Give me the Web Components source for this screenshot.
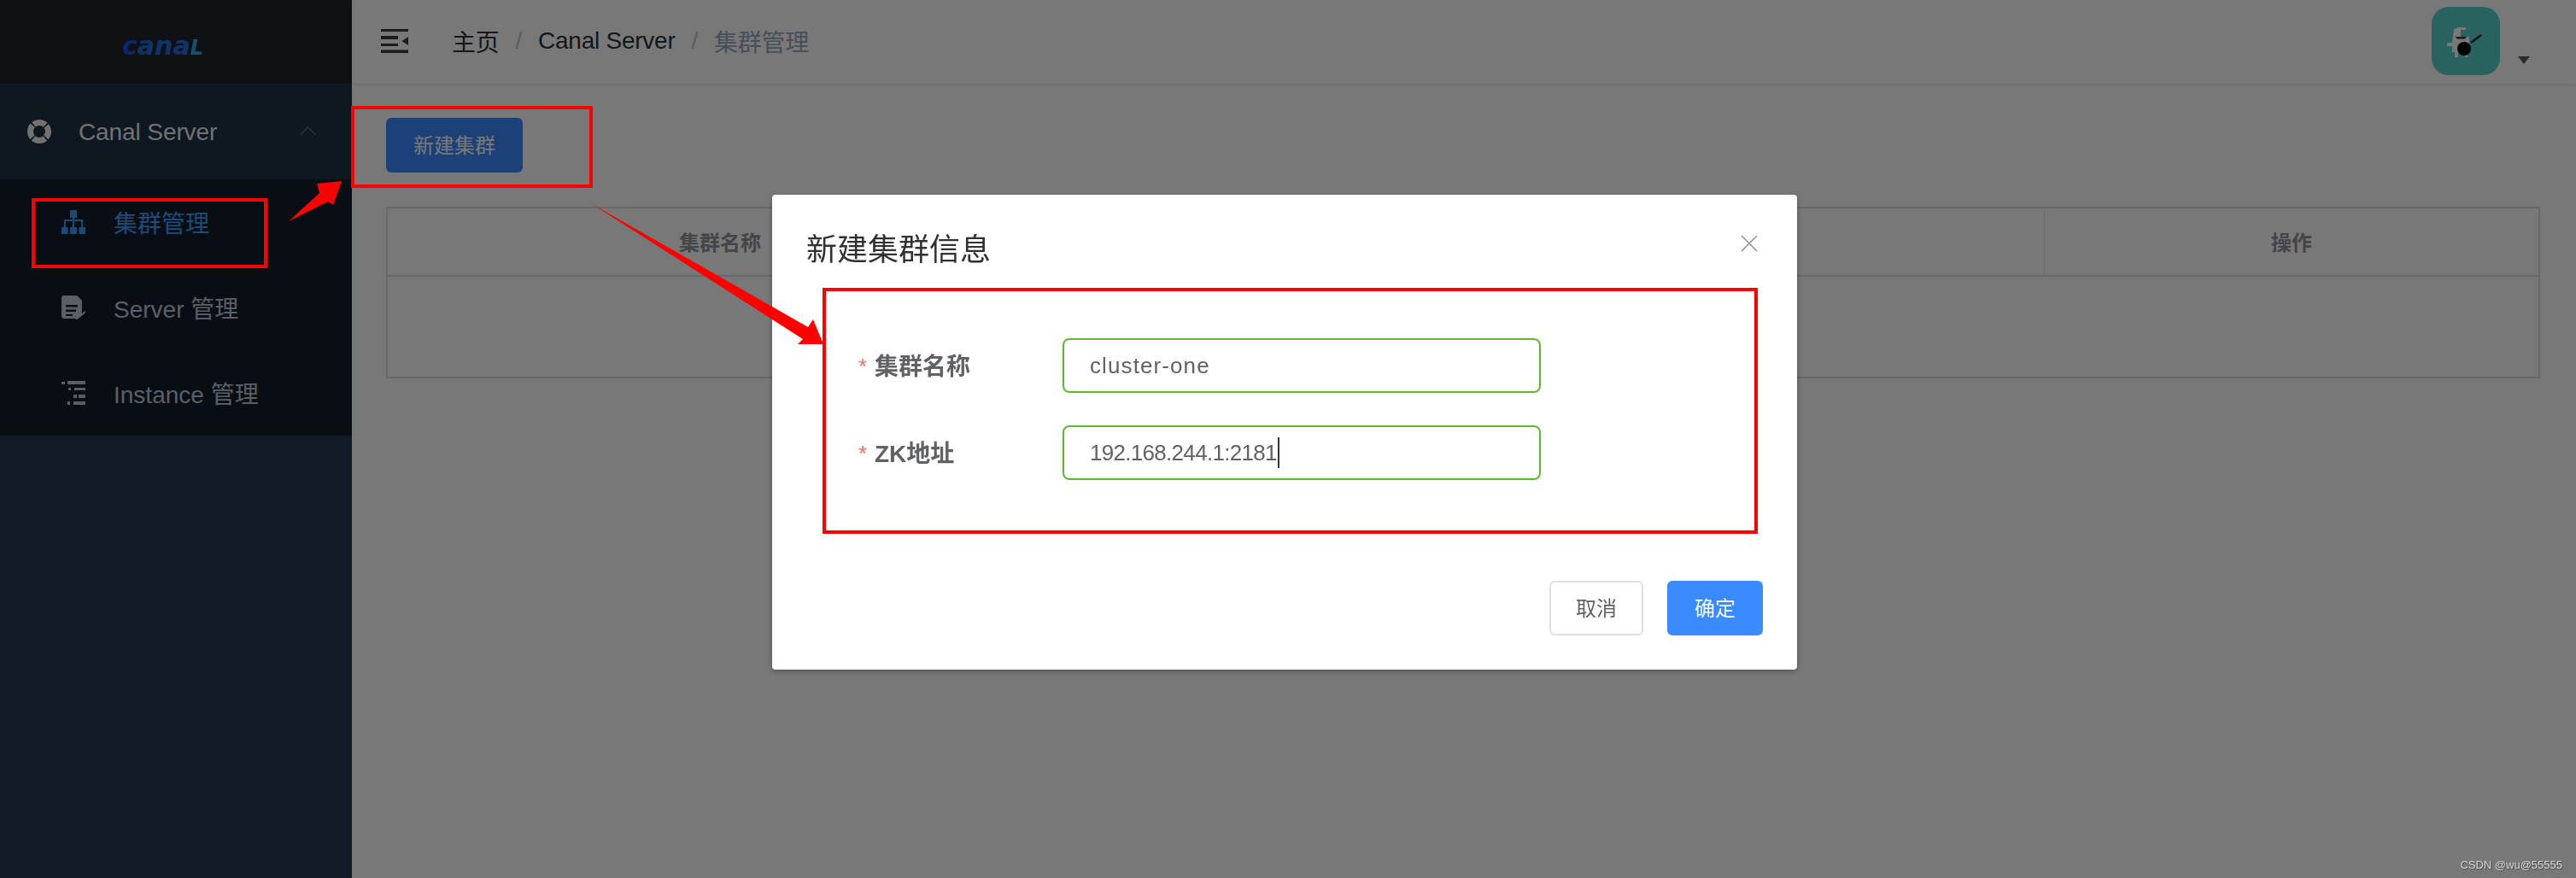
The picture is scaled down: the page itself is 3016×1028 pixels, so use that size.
<!DOCTYPE html>
<html lang="zh">
<head>
<meta charset="utf-8">
<title>新建集群</title>
<style>
  html, body { margin: 0; height: 100%; background: #fff; }
  body { font-family: "Liberation Sans", "Noto Sans CJK SC", sans-serif; }
</style>
</head>
<body>
<admin-layout>
  <side-nav slot="nav">
    <nav-group icon="aperture" label="Canal Server">
      <nav-item icon="tree" active>集群管理</nav-item>
      <nav-item icon="doc">Server 管理</nav-item>
      <nav-item icon="list">Instance 管理</nav-item>
    </nav-group>
  </side-nav>
  <top-bar slot="top"></top-bar>
  <cluster-page></cluster-page>
</admin-layout>

<modal-overlay>
  <app-modal heading="新建集群信息">
    <form-row label="集群名称" value="cluster-one" style="--spacing: 1.1px"></form-row>
    <form-row label="ZK地址" value="192.168.244.1:2181" caret style="--spacing: -.7px"></form-row>
    <app-button slot="footer">取消</app-button>
    <app-button slot="footer" primary>确定</app-button>
  </app-modal>
</modal-overlay>

<red-marks></red-marks>
<water-mark>CSDN @wu@55555</water-mark>

<script>
const ICONS = {
  aperture: '<circle cx="14" cy="14" r="10.500" fill="none" stroke="currentColor" stroke-width="7" stroke-dasharray="14.900 1.600" stroke-dashoffset="7.450"/>',
  tree: '<path fill="currentColor" d="M10 0h8v9h-8zM13 9h2v3h-2zM3 11h22v2H3zM3 13h2v7H3zM13 13h2v7h-2zM23 13h2v7h-2zM0 20h7.500v8H0zM10 20h8v8h-8zM20.500 20H28v8h-7.500z"/>',
  doc: '<path fill="currentColor" fill-rule="evenodd" d="M3 0h15l6 6v16l-5 5H3a3 3 0 0 1-3-3V3a3 3 0 0 1 3-3zM5 11v2.500h14V11zM5 16.500V19h12v-2.500zM5 22v2h8v-2z"/><path fill="none" stroke="currentColor" stroke-width="2" d="M17 28l11-9"/>',
  list: '<path fill="currentColor" d="M0 1h4v3H0zM7 0h21v4H7zM8 8h3v3H8zM15 8h13v3H15zM14 16h4v4h-4zM20 16h8v4h-8zM7 24h3v4H7zM14 24h14v4H14z"/>'
};

class AdminLayout extends HTMLElement {
  connectedCallback() {
    this.attachShadow({ mode: 'open' });
    this.shadowRoot.innerHTML = `
      <style>
        :host { display: flex; height: 1028px; }
        .nav { flex: 0 0 412px; display: flex; }
        .main { flex: 1; min-width: 0; display: flex; flex-direction: column; background: #fff; }
      </style>
      <div class="nav"><slot name="nav"></slot></div>
      <div class="main"><slot name="top"></slot><slot></slot></div>
    `;
  }
}

class SideNav extends HTMLElement {
  connectedCallback() {
    this.attachShadow({ mode: 'open' });
    this.shadowRoot.innerHTML = `
      <style>
        :host { display: flex; flex-direction: column; flex: 1; background: #283951; }
        .logo {
          height: 98px;
          background: #20242d;
          display: flex;
          align-items: center;
          justify-content: center;
          padding: 10px 31px 0 0;
          box-sizing: border-box;
          font: italic 700 30px/1 "DejaVu Sans", sans-serif;
          color: #2370e0;
        }
        .logo i { font-style: inherit; color: #2050e8; }
        .logo b { font-size: 24px; color: #28b0f0; }
      </style>
      <div class="logo"><span><i>c</i>ana<b>L</b></span></div>
      <slot></slot>
    `;
  }
}

class NavGroup extends HTMLElement {
  connectedCallback() {
    this.attachShadow({ mode: 'open' });
    this.shadowRoot.innerHTML = `
      <style>
        :host { display: block; color: #f0f0f0; font-size: 28px; }
        .title {
          height: 112px;
          display: flex;
          align-items: center;
          background: #203144;
          padding: 0 42px 0 32px;
        }
        .title svg.i { width: 28px; height: 28px; margin-right: 32px; }
        .title span { margin-top: 2px; letter-spacing: -.1px; }
        .title svg.c { margin-left: auto; width: 19px; height: 10px; margin-top: -3px; color: #5d6a78; }
        .items { background: #151e2d; }
      </style>
      <div class="title">
        <svg class="i" viewBox="0 0 28 28">${ICONS[this.getAttribute('icon')]}</svg>
        <span>${this.getAttribute('label')}</span>
        <svg class="c" viewBox="0 0 19 10"><path d="M1 9.500L9.500 1 18 9.500" fill="none" stroke="currentColor" stroke-width="1.500"/></svg>
      </div>
      <div class="items"><slot></slot></div>
    `;
  }
}

class NavItem extends HTMLElement {
  connectedCallback() {
    this.attachShadow({ mode: 'open' });
    this.shadowRoot.innerHTML = `
      <style>
        :host {
          display: flex;
          align-items: center;
          gap: 33px;
          height: 100px;
          padding-left: 72px;
          font-size: 28px;
          color: #bfcbd9;
        }
        :host([active]) { color: #409eff; }
        svg { width: 28px; height: 28px; margin-top: -1px; }
      </style>
      <svg viewBox="0 0 28 28">${ICONS[this.getAttribute('icon')]}</svg>
      <span><slot></slot></span>
    `;
  }
}

class TopBar extends HTMLElement {
  connectedCallback() {
    this.attachShadow({ mode: 'open' });
    this.shadowRoot.innerHTML = `
      <style>
        :host {
          display: flex;
          align-items: center;
          height: 98px;
          padding-left: 34px;
          background: #fff;
          box-shadow: 0 2px 2px rgba(0, 21, 41, .08);
          font-size: 28px;
          color: #303133;
        }
        .burger { width: 32px; height: 28px; flex: none; margin-top: -2px; color: #3c3c3c; }
        .crumbs { margin-left: 51px; display: flex; align-items: center; margin-top: -2px; }
        .crumbs span { letter-spacing: -.25px; }
        .sep { margin: 0 19px; color: #c0c4cc; }
        .last { color: #97a8be; }
        .avatar {
          align-self: flex-start;
          margin: 8px 0 0 auto;
          width: 80px;
          height: 80px;
          border-radius: 20px;
          background: #55d3c9;
          flex: none;
        }
        .avatar svg { display: block; }
        .drop {
          align-self: flex-start;
          margin: 66px 54px 0 21px;
          width: 0;
          height: 0;
          border: solid transparent;
          border-width: 9px 7.500px 0;
          border-top-color: #5a5a5a;
        }
      </style>
      <svg class="burger" viewBox="0 0 32 28">
        <path fill="currentColor" d="M0 0h32v3H0zM0 8h20v4H0zM0 17h20v3H0zM0 24.500h32V28H0zM32 9v10l-7.500-5z"/>
      </svg>
      <div class="crumbs">
        <span>主页</span><span class="sep">/</span>
        <span>Canal Server</span><span class="sep">/</span>
        <span class="last">集群管理</span>
      </div>
      <div class="avatar">
        <svg width="80" height="80" viewBox="0 0 80 80">
          <path fill="#fff" d="M26 26l6-2h8v3h-6v8h10v16h-2v8h-3v-6H31v6h-4v-6h-3v-7h-6v-4h6z"/>
          <path fill="#333" d="M28 35h13l-2 2.500H30z"/>
          <circle cx="38" cy="49" r="8" fill="#000"/>
          <path d="M46 42l12-9" stroke="#123" stroke-width="2.500"/>
        </svg>
      </div>
      <span class="drop"></span>
    `;
  }
}

class ClusterPage extends HTMLElement {
  connectedCallback() {
    this.attachShadow({ mode: 'open' });
    this.shadowRoot.innerHTML = `
      <style>
        :host { display: flex; flex-direction: column; align-items: flex-start; padding: 40px 42px 0 40px; }
        .table {
          align-self: stretch;
          margin-top: 40px;
          border: 2px solid #dcdde6;
          display: grid;
          grid-template-columns: 778px 1fr 579px;
          grid-template-rows: 80px 117px;
          font-size: 24px;
          font-weight: 700;
          color: #909399;
        }
        .table div {
          display: flex;
          align-items: center;
          justify-content: center;
          box-sizing: border-box;
          padding-bottom: 2px;
          border-bottom: 2px solid #dcdde6;
        }
        .table div + div { border-left: 1px solid #e6e7ee; }
        .table .empty { grid-column: 1 / -1; border: 0; }
      </style>
      <app-button primary wide>新建集群</app-button>
      <div class="table">
        <div>集群名称</div>
        <div></div>
        <div>操作</div>
        <div class="empty"></div>
      </div>
    `;
  }
}

class AppButton extends HTMLElement {
  connectedCallback() {
    this.attachShadow({ mode: 'open' });
    this.shadowRoot.innerHTML = `
      <style>
        :host {
          display: inline-flex;
          align-items: center;
          justify-content: center;
          box-sizing: border-box;
          height: 64px;
          width: 110px;
          padding-bottom: 4px;
          border: 2px solid #dcdfe6;
          border-radius: 6px;
          background: #fff;
          color: #606266;
          font-size: 24px;
        }
        :host([primary]) { background: #3a8bff; border-color: #3a8bff; color: #fff; width: 112px; }
        :host([wide]) { width: 160px; }
      </style>
      <slot></slot>
    `;
  }
}

class ModalOverlay extends HTMLElement {
  connectedCallback() {
    this.attachShadow({ mode: 'open' });
    this.shadowRoot.innerHTML = `
      <style>
        :host {
          position: fixed;
          inset: 0;
          display: flex;
          justify-content: center;
          align-items: flex-start;
          box-sizing: border-box;
          padding: 228px 8px 0 0;
          background: rgba(0, 0, 0, .53);
        }
      </style>
      <slot></slot>
    `;
  }
}

class AppModal extends HTMLElement {
  connectedCallback() {
    this.attachShadow({ mode: 'open' });
    this.shadowRoot.innerHTML = `
      <style>
        :host {
          display: block;
          width: 1200px;
          background: #fff;
          border-radius: 4px;
          box-shadow: 0 2px 6px rgba(0, 0, 0, .3);
        }
        header {
          display: flex;
          justify-content: space-between;
          padding: 47px 46px 0 40px;
          font-size: 36px;
          line-height: 36px;
          color: #303133;
        }
        header svg { width: 20px; height: 20px; color: #909399; }
        .form {
          display: grid;
          grid-template-columns: 239px 560px;
          row-gap: 38px;
          padding: 85px 0 0 101px;
        }
        footer {
          display: flex;
          justify-content: flex-end;
          gap: 28px;
          padding: 118px 40px 40px 0;
        }
      </style>
      <header>
        <span>${this.getAttribute('heading')}</span>
        <svg viewBox="0 0 20 20"><path d="M1 1l18 18M19 1L1 19" stroke="currentColor" stroke-width="1.600"/></svg>
      </header>
      <div class="form"><slot></slot></div>
      <footer><slot name="footer"></slot></footer>
    `;
  }
}

class FormRow extends HTMLElement {
  connectedCallback() {
    this.attachShadow({ mode: 'open' });
    this.shadowRoot.innerHTML = `
      <style>
        :host { display: contents; }
        label {
          display: flex;
          align-items: center;
          font-size: 28px;
          font-weight: 700;
          color: #606266;
        }
        label .text { margin-top: -3px; }
        .star { color: #f56c6c; font-weight: 400; width: 19px; font-size: 26px; margin-top: 2px; }
        .input {
          box-sizing: border-box;
          height: 64px;
          padding: 0 30px;
          border: 2px solid #5fb92f;
          border-radius: 8px;
          display: flex;
          align-items: center;
          font-size: 26px;
          letter-spacing: var(--spacing, 0);
          color: #606266;
        }
        .caret { width: 2px; height: 36px; background: #333; margin-left: 1px; }
      </style>
      <label><span class="star">*</span><span class="text">${this.getAttribute('label')}</span></label>
      <div class="input"><span>${this.getAttribute('value')}</span>${this.hasAttribute('caret') ? '<i class="caret"></i>' : ''}</div>
    `;
  }
}

class RedMarks extends HTMLElement {
  connectedCallback() {
    this.attachShadow({ mode: 'open' });
    this.shadowRoot.innerHTML = `
      <style>
        :host { position: fixed; inset: 0; pointer-events: none; }
        svg { display: block; }
        rect { fill: none; stroke: #f00; stroke-width: 4; }
        polygon { fill: #f00; }
      </style>
      <svg width="3016" height="1028" viewBox="0 0 3016 1028">
        <rect x="39" y="234" width="272" height="78"/>
        <rect x="413" y="126" width="279" height="92"/>
        <rect x="965" y="339" width="1091" height="284"/>
        <polygon points="338,259 374,226 371,215 400,212 390,240 384,236"/>
        <polygon points="690,237 946,383 952,374 964,403 934,403 940,397"/>
      </svg>
    `;
  }
}

class WaterMark extends HTMLElement {
  connectedCallback() {
    this.attachShadow({ mode: 'open' });
    this.shadowRoot.innerHTML = `
      <style>
        :host {
          position: fixed;
          right: 16px;
          bottom: 8px;
          font-size: 13px;
          line-height: 15px;
          color: #d4d4d4;
          text-shadow: 1px 1px 1px rgba(0, 0, 0, .4);
        }
      </style>
      <slot></slot>
    `;
  }
}

customElements.define('admin-layout', AdminLayout);
customElements.define('side-nav', SideNav);
customElements.define('nav-group', NavGroup);
customElements.define('nav-item', NavItem);
customElements.define('top-bar', TopBar);
customElements.define('cluster-page', ClusterPage);
customElements.define('app-button', AppButton);
customElements.define('modal-overlay', ModalOverlay);
customElements.define('app-modal', AppModal);
customElements.define('form-row', FormRow);
customElements.define('red-marks', RedMarks);
customElements.define('water-mark', WaterMark);
</script>
</body>
</html>
